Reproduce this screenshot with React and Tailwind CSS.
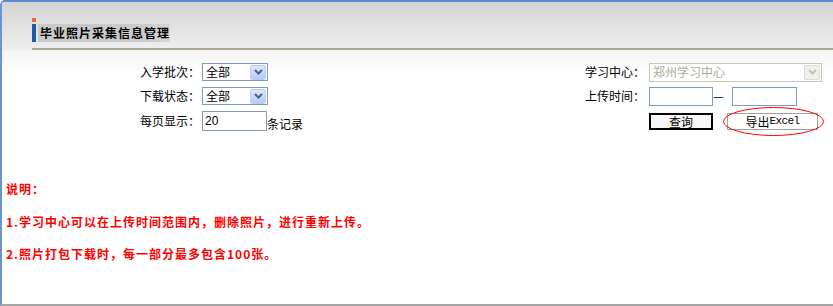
import React from "react";

function Arrow({ disabled }) {
  return (
    <div
      className={
        disabled
          ? "flex h-[15px] w-[16px] items-center justify-center rounded-[2px] border border-[#dddcd2] bg-[#f1f1ec]"
          : "flex h-[15px] w-[16px] items-center justify-center rounded-[2px] border border-[#b9cbf3] bg-gradient-to-b from-[#dbe6fe] to-[#b6cbf8]"
      }
    >
      <svg width="9" height="6" viewBox="0 0 9 6">
        <polyline
          points="1,1 4.5,4.5 8,1"
          fill="none"
          stroke={disabled ? "#c3c3bb" : "#4d6185"}
          strokeWidth="2"
        />
      </svg>
    </div>
  );
}

function FakeSelect({ value, width, disabled }) {
  return (
    <div
      className={
        disabled
          ? "flex h-[19px] items-center justify-between border border-[#c9c7ba] bg-white pl-[3px] pr-[1px] text-[#aca899]"
          : "flex h-[18px] items-center justify-between border border-[#7f9db9] bg-white pl-[3px] pr-[1px]"
      }
      style={{ width }}
    >
      <span className="leading-[14px]">{value}</span>
      <Arrow disabled={disabled} />
    </div>
  );
}

export default function App() {
  return (
    <div className="relative h-[306px] w-full overflow-hidden rounded-tl-[5px] border-b-2 border-l-2 border-t-2 border-b-[#a6a6a6] border-l-[#6a94d4] border-t-[#5c8bd2] bg-white font-['Noto_Sans_CJK_SC','Liberation_Sans',sans-serif] text-[12px] text-black">
      {/* header */}
      <div className="h-[46px] bg-gradient-to-b from-[#d4d4d4] to-[#eeeeee] pl-[30px] pt-[16px]">
        <div className="flex">
          <div className="flex w-[4px] flex-col">
            <div className="h-[4px] bg-[#e9663a]"></div>
            <div className="mt-[2px] h-[18px] bg-[#2259a8]"></div>
          </div>
          <div className="ml-[2px] flex flex-col">
            <div className="h-[4px] w-[106px] bg-[#dedede]"></div>
            <div className="mt-[2px] h-[18px] w-[132px] bg-gradient-to-r from-[#cacaca] from-80% to-[#d6d6d6] pl-[2px] text-[12px] font-bold leading-[18px] tracking-[1px]">
              毕业照片采集信息管理
            </div>
          </div>
        </div>
      </div>
      <div className="flex h-[2px]">
        <div className="w-[30px] bg-[#eeeeee]"></div>
        <div className="flex-1 bg-[#aaa690]"></div>
      </div>

      {/* body */}
      <div className="bg-[linear-gradient(#f4f4f4,#ffffff_26px)] pt-[12px]">
        <div className="flex h-[20px] items-center">
          <div className="w-[198px] text-right">入学批次：</div>
          <div className="ml-[2px] w-[383px]">
            <FakeSelect value="全部" width={66} />
          </div>
          <div className="w-[64px]">学习中心：</div>
          <FakeSelect value="郑州学习中心" width={173} disabled />
        </div>

        <div className="mt-[4px] flex h-[20px] items-center">
          <div className="w-[198px] text-right">下载状态：</div>
          <div className="ml-[2px] w-[383px]">
            <FakeSelect value="全部" width={66} />
          </div>
          <div className="w-[64px]">上传时间：</div>
          <div className="h-[19px] w-[64px] border border-[#7f9db9] bg-white"></div>
          <span className="w-[12px] leading-[14px]">—</span>
          <div className="ml-[7px] h-[19px] w-[65px] border border-[#7f9db9] bg-white"></div>
        </div>

        <div className="mt-[5px] flex h-[20px] items-center">
          <div className="w-[198px] text-right">每页显示：</div>
          <div className="ml-[2px] flex w-[383px] items-end">
            <div className="flex h-[20px] w-[65px] items-center border border-[#7f9db9] bg-white pl-[2px] font-['Liberation_Sans',sans-serif]">
              20
            </div>
            <span className="leading-[14px]">条记录</span>
          </div>
          <div className="w-[64px]"></div>
          <button className="flex h-[17px] w-[64px] items-center justify-center border-2 border-black bg-[#f7f7f7] leading-[13px]">
            查询
          </button>
          <div className="relative ml-[14px]">
            <button className="flex h-[17px] w-[91px] items-center justify-center border border-[#a0a0a0] bg-white leading-[13px]">
              导出<span className="font-['Liberation_Mono',monospace] text-[11px] tracking-[-0.6px]">Excel</span>
            </button>
            <svg className="absolute left-[-4px] top-[-6px]" width="101" height="29" viewBox="0 0 101 29">
              <ellipse cx="50.5" cy="14.5" rx="50" ry="14" fill="none" stroke="#ff0000" strokeWidth="1" />
            </svg>
          </div>
        </div>

        {/* notes */}
        <div className="mt-[50px] pl-[4px] font-bold leading-[16px] tracking-[1px] text-[#ff0000]">
          <p>说明：</p>
          <p className="mt-[17px]">1.学习中心可以在上传时间范围内，删除照片，进行重新上传。</p>
          <p className="mt-[16px]">2.照片打包下载时，每一部分最多包含100张。</p>
        </div>
      </div>

      <div className="absolute bottom-[-2px] left-[-2px] h-[2px] w-[35px] bg-[#6a94d4]"></div>
    </div>
  );
}
